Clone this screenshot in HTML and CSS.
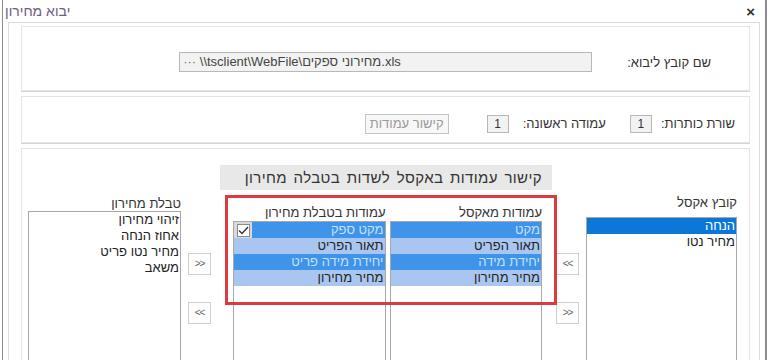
FILE: index.html
```html
<!DOCTYPE html>
<html lang="he" dir="rtl">
<head>
  <meta charset="UTF-8">
  <title>יבוא מחירון</title>
  <link rel="stylesheet" href="styles.css">
</head>
<body>
<div class="window">
  <div class="titlebar">
    <span class="title">יבוא מחירון</span>
    <span class="close">×</span>
  </div>

  <div class="frame">
    <div class="panel file-panel">
      <span class="label">שם קובץ ליבוא:</span>
      <div class="file-field"><span class="dots">···</span> \\tsclient\WebFile\מחירוני ספקים.xls</div>
    </div>

    <div class="panel rows-panel">
      <span class="label">שורת כותרות:</span>
      <span class="num-box first">1</span>
      <span class="label">עמודה ראשונה:</span>
      <span class="num-box">1</span>
      <span class="link-btn">קישור עמודות</span>
    </div>

    <div class="panel map-panel">
      <div class="col excel-col">
        <div class="col-label">קובץ אקסל</div>
        <div class="listbox">
          <div class="item selected">הנחה</div>
          <div class="item">מחיר נטו</div>
        </div>
      </div>

      <div class="col move-col right-moves">
        <span class="move-btn">&lt;&lt;</span>
        <span class="move-btn">&gt;&gt;</span>
      </div>

      <div class="col mid-col">
        <div class="mid-header">קישור עמודות באקסל לשדות בטבלה מחירון</div>
        <div class="mid-lists">
          <div class="mid-list">
            <div class="col-label">עמודות מאקסל</div>
            <div class="listbox">
              <div class="item hi">מקט</div>
              <div class="item lo">תאור הפריט</div>
              <div class="item hi">יחידת מידה</div>
              <div class="item lo">מחיר מחירון</div>
            </div>
          </div>
          <div class="mid-list">
            <div class="col-label">עמודות בטבלת מחירון</div>
            <div class="listbox">
              <div class="item hi with-check">
                <span class="item-text">מקט ספק</span>
                <span class="check-cell">
                  <span class="check">
                    <svg width="11" height="9" viewBox="0 0 11 9"><path d="M1 4.5 L4 7.5 L10 1" fill="none" stroke="#333" stroke-width="1.4"/></svg>
                  </span>
                </span>
              </div>
              <div class="item lo">תאור הפריט</div>
              <div class="item hi">יחידת מידה פריט</div>
              <div class="item lo">מחיר מחירון</div>
            </div>
          </div>
        </div>
        <div class="red-mark"></div>
      </div>

      <div class="col move-col left-moves">
        <span class="move-btn">&gt;&gt;</span>
        <span class="move-btn">&lt;&lt;</span>
      </div>

      <div class="col table-col">
        <div class="col-label">טבלת מחירון</div>
        <div class="listbox">
          <div class="item">זיהוי מחירון</div>
          <div class="item">אחוז הנחה</div>
          <div class="item">מחיר נטו פריט</div>
          <div class="item">משאב</div>
        </div>
      </div>
    </div>
  </div>
</div>
</body>
</html>
```

FILE: styles.css
```css
body {
  margin: 0;
  width: 768px;
  height: 360px;
  overflow: hidden;
  background: #fff;
  font-family: "Liberation Sans", "DejaVu Sans", sans-serif;
  font-size: 13px;
  color: #333;
}

.window {
  margin: 0 1px 0 2px;
  height: 360px;
  overflow: hidden;
  box-sizing: border-box;
  border-left: 1px solid #8c8c8c;
  border-right: 2px solid #8c8c8c;
}

.titlebar {
  direction: ltr;
  display: flex;
  justify-content: space-between;
  align-items: center;
  height: 22px;
  padding: 0 10px 0 2px;
}
.title {
  direction: rtl;
  font-size: 14px;
  color: #6e5c84;
}
.close {
  font-size: 15px;
  font-weight: bold;
  color: #333;
}

.frame {
  margin: 0 5px;
  padding: 3px 9px 0 12px;
  border: 1px solid #dcdcdc;
  border-bottom: none;
  height: 334px;
  overflow: hidden;
}

.panel {
  border: 1px solid #e4e4e4;
  box-shadow: 0 1px 0 #d6d6d6;
  margin-bottom: 5px;
  box-sizing: border-box;
}

.label {
  color: #333;
  white-space: nowrap;
}

.file-panel {
  height: 65px;
  display: flex;
  align-items: center;
  padding: 7px 38px 0 0;
}
.file-field {
  direction: ltr;
  margin-right: 35px;
  width: 413px;
  height: 20px;
  box-sizing: border-box;
  border: 1px solid #b8b8b8;
  background: #f2f2f2;
  line-height: 18px;
  padding-left: 3px;
  font-size: 13px;
  color: #444;
  white-space: nowrap;
  overflow: hidden;
}
.dots {
  color: #777;
}

.rows-panel {
  height: 47px;
  display: flex;
  align-items: center;
  padding: 8px 14px 0 0;
}
.num-box {
  width: 22px;
  height: 18px;
  box-sizing: border-box;
  border: 1px solid #b8b8b8;
  background: #f2f2f2;
  text-align: center;
  line-height: 16px;
  font-size: 12px;
  margin: 0 9px 0 24px;
}
.rows-panel .num-box:not(.first) {
  margin: 0 14px 0 38px;
}
.link-btn {
  width: 84px;
  height: 20px;
  box-sizing: border-box;
  border: 1px solid #c4c4c4;
  background: #f7f7f7;
  color: #9a9a9a;
  font-size: 13px;
  line-height: 18px;
  text-align: center;
  white-space: nowrap;
}

.map-panel {
  height: 220px;
  display: flex;
  align-items: flex-start;
  padding-right: 12px;
}

.col-label {
  line-height: 15px;
  height: 15px;
  color: #333;
  white-space: nowrap;
}

.listbox {
  border: 1px solid #a8a8a8;
  background: #fff;
  height: 180px;
  box-sizing: border-box;
}
.item {
  height: 16px;
  line-height: 16px;
  padding-right: 1px;
  color: #222;
  white-space: nowrap;
  overflow: hidden;
}
.item.selected {
  background: #0b78d8;
  color: #fff;
}
.item.hi {
  background: #3f93e8;
  color: #c6e0ff;
}
.item.lo {
  background: #a9c6f0;
  color: #222;
}
.item.with-check {
  display: flex;
}
.item-text {
  flex: 1;
}
.check-cell {
  width: 18px;
  background: #d9d9d9;
  display: flex;
  align-items: center;
  justify-content: center;
}
.check {
  width: 13px;
  height: 13px;
  box-sizing: border-box;
  border: 1px solid #8a8a8a;
  background: #fff;
  display: flex;
  align-items: center;
  justify-content: center;
}

.excel-col {
  width: 151px;
  margin-top: 46px;
}
.excel-col .col-label {
  margin-bottom: 7px;
}

.move-col {
  width: 23px;
  margin-top: 104px;
  display: flex;
  flex-direction: column;
  gap: 27px;
}
.right-moves {
  margin-right: 7px;
}
.left-moves {
  margin-right: 9px;
}
.move-btn {
  direction: ltr;
  height: 22px;
  box-sizing: border-box;
  border: 1px solid #cfcfcf;
  background: #fdfdfd;
  color: #666;
  font-size: 10px;
  letter-spacing: -1px;
  line-height: 20px;
  text-align: center;
}

.mid-col {
  position: relative;
  width: 332px;
  margin: 16px 4px 0 0;
}
.mid-header {
  height: 25px;
  line-height: 25px;
  background: #e8e8e8;
  padding-right: 10px;
  font-size: 15px;
  letter-spacing: 0.4px;
  word-spacing: 2px;
  color: #333;
  white-space: nowrap;
}
.mid-lists {
  display: flex;
  gap: 4px;
  padding: 15px 10px 0 13px;
}
.mid-list {
  flex: 1;
}
.mid-list .col-label {
  margin-bottom: 1px;
}

.red-mark {
  position: absolute;
  left: 5px;
  top: 30px;
  width: 332px;
  height: 110px;
  box-sizing: border-box;
  border: 3px solid #dc3a3e;
}

.table-col {
  width: 153px;
  margin: 47px 7px 0 0;
}
.table-col .col-label {
  margin-bottom: 0;
}
```
